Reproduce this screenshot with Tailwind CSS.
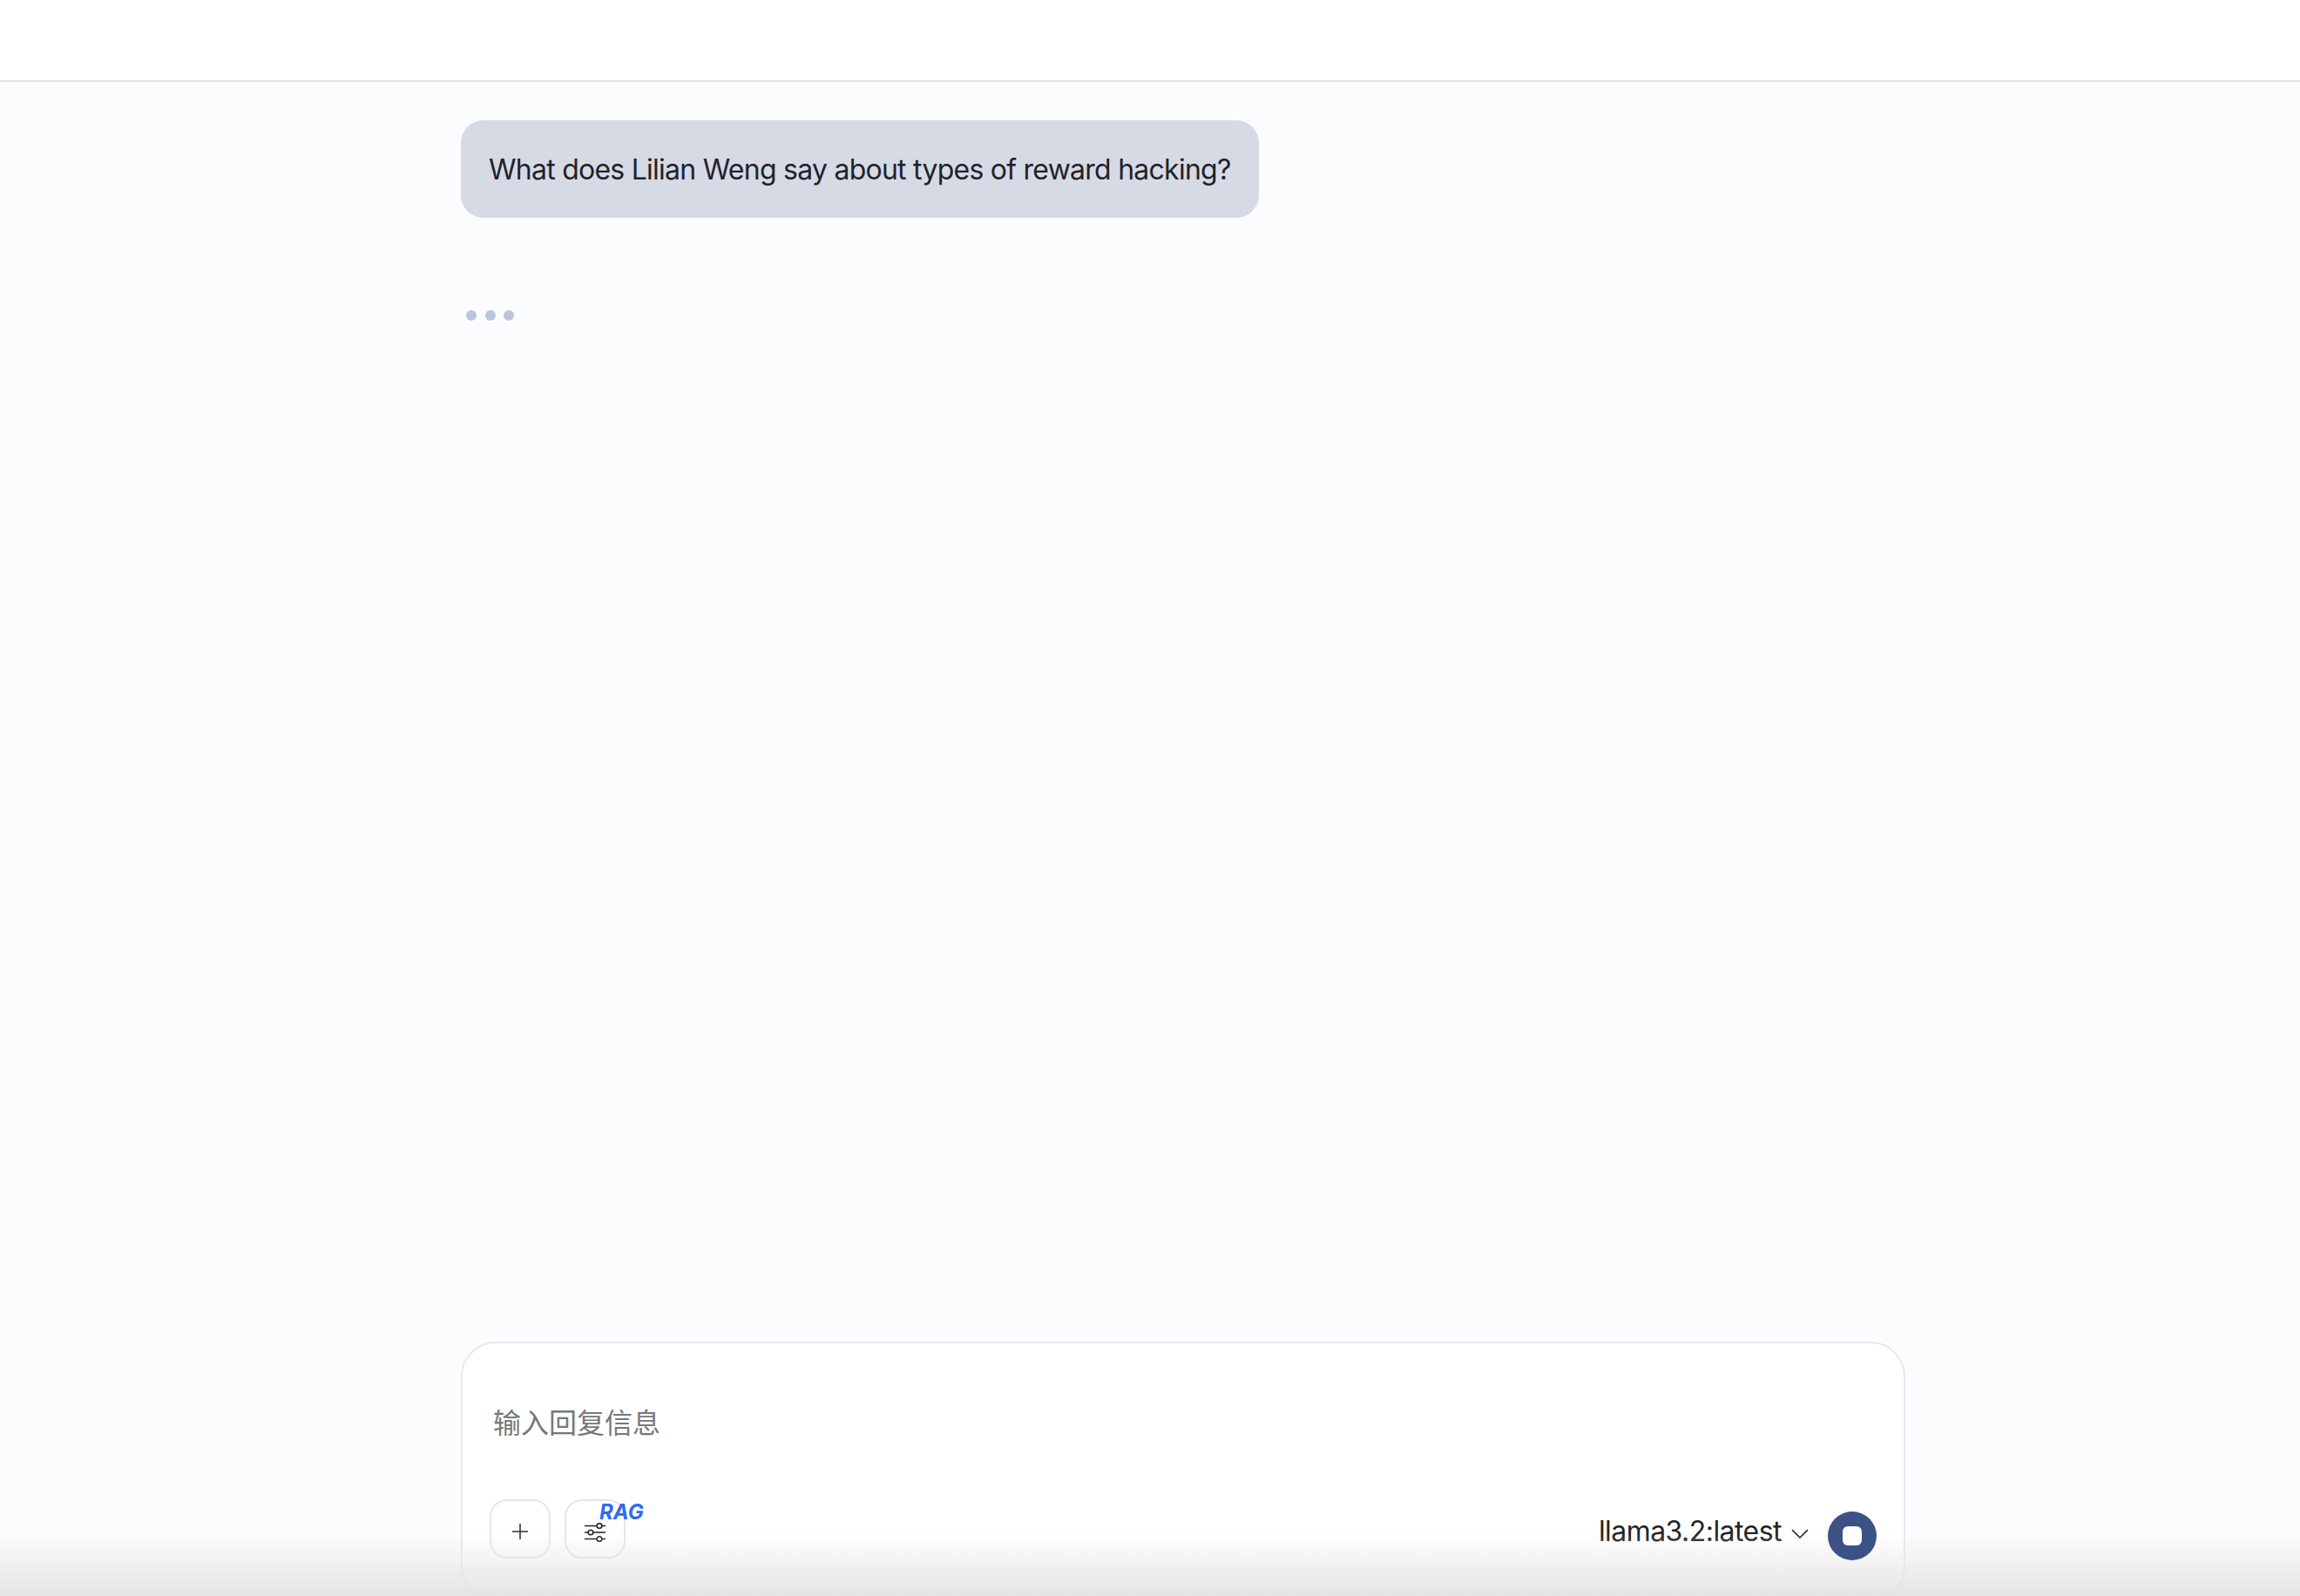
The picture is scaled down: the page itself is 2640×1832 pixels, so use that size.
<!DOCTYPE html>
<html lang="en">

<head>
    <title>Chat</title>
    <meta charset="UTF-8">
    <meta name="viewport" content="width=device-width, initial-scale=1">
    <script src="https://cdn.jsdelivr.net/npm/@tailwindcss/browser@4"></script>
</head>

<body>

<div class="relative h-screen overflow-hidden bg-[#fbfcfe] font-['Inter','Noto_Sans_CJK_SC',sans-serif]">
    <header class="h-[94px] bg-white border-b-2 border-[#e3e4e6]"></header>

    <main class="ml-[529px] w-[1658px] h-[1744px] flex flex-col">
        <div class="flex-1 pt-[44px]">
            <div class="w-fit h-[112px] px-[32px] pt-[2px] flex items-center rounded-[26px] bg-[#d6dae5] text-[32px] tracking-[-0.75px] text-[#1f2329]">
                What does Lilian Weng say about types of reward hacking?
            </div>
            <div class="mt-[106px] ml-[6px] flex gap-[9.500px]">
                <span class="size-[12px] rounded-full bg-[#bcc5d8]"></span>
                <span class="size-[12px] rounded-full bg-[#bcc5d8]"></span>
                <span class="size-[12px] rounded-full bg-[#bcc5d8]"></span>
            </div>
        </div>

        <div class="h-[298px] shrink-0 bg-white border-2 border-[#e8e9ec] rounded-[40px] px-[31px] pt-[70px]">
            <div class="pl-[4px] h-[44px] leading-[44px] text-[32px] text-[#777777]">输入回复信息</div>
            <div class="mt-[65px] flex justify-between">
                <div class="flex gap-[16px]">
                    <button class="w-[70px] h-[68px] flex items-center justify-center rounded-[20px] border-2 border-[#e6e6e6]">
                        <svg class="w-[18px] h-[18px] mt-[5px]" viewBox="0 0 18 18" fill="none" stroke="#333333" stroke-width="1.6"><path d="M9 0v18M0 9h18"/></svg>
                    </button>
                    <button class="relative w-[70px] h-[68px] flex items-center justify-center rounded-[20px] border-2 border-[#e6e6e6]">
                        <svg class="w-[24px] h-[22px] mt-[7px]" viewBox="0 0 24 22" fill="none" stroke="#222222" stroke-width="1.5">
                            <path d="M0 3.500h24M0 11h24M0 18.500h24"/>
                            <circle cx="17" cy="3.500" r="2.800" fill="#ffffff"/>
                            <circle cx="7" cy="11" r="2.800" fill="#ffffff"/>
                            <circle cx="17" cy="18.500" r="2.800" fill="#ffffff"/>
                        </svg>
                        <span class="absolute left-[38px] top-[-1px] text-[24px] leading-[28px] font-bold italic text-[#2f6bf0]">RAG</span>
                    </button>
                </div>
                <div class="flex items-start">
                    <span class="mt-[15px] text-[32px] leading-[44px] tracking-[-0.55px] text-[#1f2329]">llama3.2:latest</span>
                    <svg class="ml-[11px] mt-[34px] w-[20px] h-[11px]" viewBox="0 0 20 11" fill="none" stroke="#222222" stroke-width="1.6"><path d="M1 1l9 9 9-9"/></svg>
                    <button class="relative z-10 ml-[22px] mt-[14px] size-[56px] rounded-full bg-[#3c5285] flex items-center justify-center">
                        <span class="size-[22px] rounded-[6px] bg-white"></span>
                    </button>
                </div>
            </div>
        </div>
    </main>

    <div class="absolute inset-x-0 bottom-0 h-[72px] pointer-events-none bg-gradient-to-b from-[#e4e4e4]/0 to-[#e4e4e4]"></div>
</div>

</body>

</html>
